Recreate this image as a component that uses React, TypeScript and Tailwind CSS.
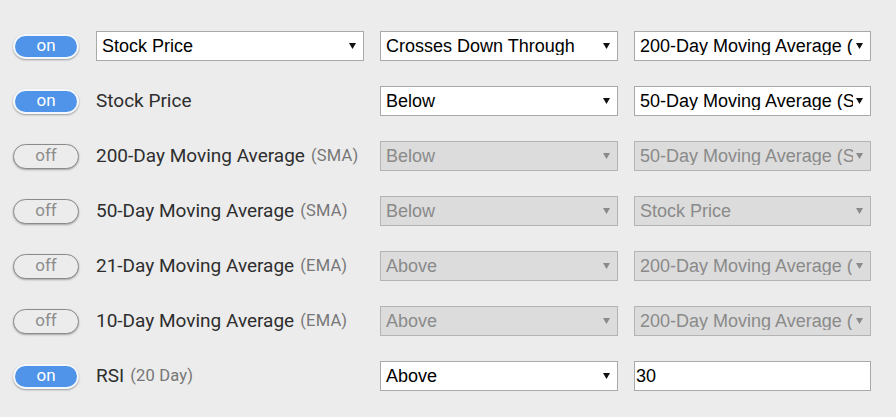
import React from "react";

type Row = {
  on: boolean;
  label?: React.ReactNode;
  first?: string;
  second: string;
  third: string;
  thirdInput?: boolean;
};

function Toggle({ on }: { on: boolean }) {
  return on ? (
    <div className="w-[66px] h-[25px] rounded-full bg-[#4f94e9] border-2 border-[#f4f7fb] shadow-[0_1px_2px_rgba(0,0,0,0.35)] flex items-center justify-center text-white text-[17px] leading-none font-['Roboto',sans-serif] box-border">
      <span className="-mt-[1px]">on</span>
    </div>
  ) : (
    <div className="w-[66px] h-[25px] rounded-full bg-[#ececec] border-[1.5px] border-[#8a8a8a] shadow-[0_1px_2px_rgba(0,0,0,0.3)] flex items-center justify-center text-[#8c8c8c] text-[17px] leading-none font-['Roboto',sans-serif] box-border">
      <span className="-mt-[1px]">off</span>
    </div>
  );
}

function Select({ value, disabled, width }: { value: string; disabled: boolean; width: string }) {
  return (
    <div
      className={`${width} h-[30px] border flex items-center box-border font-['Liberation_Sans',Arial,sans-serif] text-[18px] ${
        disabled ? "bg-[#dcdcdc] border-[#b4b4b4] text-[#8a8a8a]" : "bg-white border-[#a9a9a9] text-black"
      }`}
    >
      <div className="flex-1 overflow-hidden whitespace-nowrap pl-[5px] leading-none">{value}</div>
      <div className="w-[17px] flex items-center justify-end pr-[7px] shrink-0">
        <svg width="7" height="6" viewBox="0 0 7 6">
          <path d="M0 0 H7 L3.5 6 Z" fill={disabled ? "#8a8a8a" : "#111"} />
        </svg>
      </div>
    </div>
  );
}

function Label({ main, sub }: { main: string; sub?: string }) {
  return (
    <div className="w-[268px] h-[30px] flex items-center whitespace-nowrap font-['Roboto',sans-serif]">
      <span className="text-[19px] text-[#2e2e2e]">{main}</span>
      {sub && <span className="text-[16.5px] tracking-[0.2px] text-[#777] ml-[6px]">{sub}</span>}
    </div>
  );
}

export default function App() {
  const rows: Row[] = [
    { on: true, first: "Stock Price", second: "Crosses Down Through", third: "200-Day Moving Average (SMA)" },
    { on: true, label: <Label main="Stock Price" />, second: "Below", third: "50-Day Moving Average (SMA)" },
    { on: false, label: <Label main="200-Day Moving Average" sub="(SMA)" />, second: "Below", third: "50-Day Moving Average (SMA)" },
    { on: false, label: <Label main="50-Day Moving Average" sub="(SMA)" />, second: "Below", third: "Stock Price" },
    { on: false, label: <Label main="21-Day Moving Average" sub="(EMA)" />, second: "Above", third: "200-Day Moving Average (SMA)" },
    { on: false, label: <Label main="10-Day Moving Average" sub="(EMA)" />, second: "Above", third: "200-Day Moving Average (SMA)" },
    { on: true, label: <Label main="RSI" sub="(20 Day)" />, second: "Above", third: "30", thirdInput: true },
  ];
  return (
    <div className="w-[896px] h-[417px] bg-[#ececec] pl-[13px] pt-[31px] flex flex-col gap-[25px] box-border overflow-hidden">
      {rows.map((r, i) => (
        <div key={i} className="flex items-center h-[30px]">
          <Toggle on={r.on} />
          <div className="ml-[17px]">
            {r.first ? <Select value={r.first} disabled={!r.on} width="w-[268px]" /> : r.label}
          </div>
          <div className="ml-4">
            <Select value={r.second} disabled={!r.on} width="w-[238px]" />
          </div>
          <div className="ml-4">
            {r.thirdInput ? (
              <div className="w-[237px] h-[30px] bg-white border border-[#a9a9a9] box-border flex items-center pl-[1px] font-['Liberation_Sans',Arial,sans-serif] text-[18px] text-black leading-none">
                {r.third}
              </div>
            ) : (
              <Select value={r.third} disabled={!r.on} width="w-[237px]" />
            )}
          </div>
        </div>
      ))}
    </div>
  );
}
